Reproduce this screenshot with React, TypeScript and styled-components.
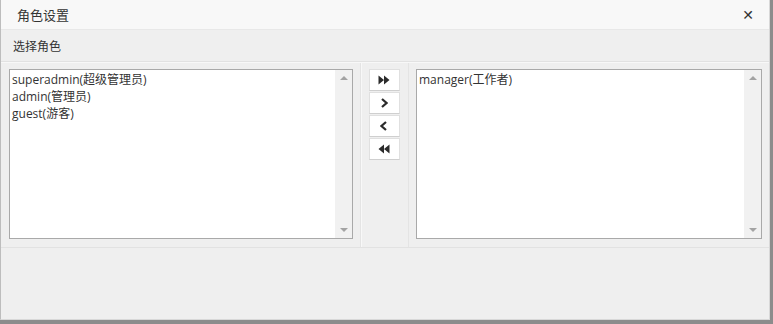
import React from "react";
import styled, { createGlobalStyle } from "styled-components";

const GlobalStyle = createGlobalStyle`
  html, body {
    margin: 0;
    padding: 0;
    background: #8c8c8c;
    font-family: "Open Sans", "Noto Sans CJK SC", sans-serif;
  }
`;

type Item = { id: string; label: string };

const sourceRoles: Item[] = [
  { id: "superadmin", label: "superadmin(超级管理员)" },
  { id: "admin", label: "admin(管理员)" },
  { id: "guest", label: "guest(游客)" },
];

const targetRoles: Item[] = [{ id: "manager", label: "manager(工作者)" }];

const Arrow = ({ dir, double }: { dir: "left" | "right"; double?: boolean }) => {
  const right = dir === "right";
  if (double) {
    const tri = (x: number) =>
      right ? `M${x} 0.5 L${x + 5.5} 5 L${x} 9.5 Z` : `M${x + 5.5} 0.5 L${x} 5 L${x + 5.5} 9.5 Z`;
    return (
      <svg width="12" height="10" viewBox="0 0 12 10">
        <path d={tri(0.5) + " " + tri(6)} fill="#2b2b2b" />
      </svg>
    );
  }
  const chev = right ? "M2 1 L6.5 5 L2 9" : "M6 1 L1.5 5 L6 9";
  return (
    <svg width="8" height="10" viewBox="0 0 8 10">
      <path d={chev} fill="none" stroke="#2b2b2b" strokeWidth="2.2" />
    </svg>
  );
};

const ListBox = ({ items }: { items: Item[] }) => (
  <StList>
    <StListBody>
      {items.map((it) => (
        <StOption key={it.id}>{it.label}</StOption>
      ))}
    </StListBody>
    <StScroll>
      <StScrollArrow up />
      <StScrollArrow />
    </StScroll>
  </StList>
);

const App = () => {
  return (
    <>
      <GlobalStyle />
      <StWindow>
        <StTitleBar>
          <StTitle>角色设置</StTitle>
          <StClose>✕</StClose>
        </StTitleBar>
        <StLabelRow>选择角色</StLabelRow>
        <StPicker>
          <StCell>
            <ListBox items={sourceRoles} />
          </StCell>
          <StMidCell>
            <StMoveBtn>
              <Arrow dir="right" double />
            </StMoveBtn>
            <StMoveBtn>
              <Arrow dir="right" />
            </StMoveBtn>
            <StMoveBtn>
              <Arrow dir="left" />
            </StMoveBtn>
            <StMoveBtn>
              <Arrow dir="left" double />
            </StMoveBtn>
          </StMidCell>
          <StCell>
            <ListBox items={targetRoles} />
          </StCell>
        </StPicker>
        <StFooter />
      </StWindow>
    </>
  );
};

export default App;

const StWindow = styled.div`
  width: 768px;
  height: 319px;
  background: #efefef;
  border: 1px solid #d8d8d8;
  border-top: none;
  border-left-color: #bdbdbd;
  display: flex;
  flex-direction: column;
`;

const StTitleBar = styled.div`
  height: 30px;
  background: #f8f8f8;
  border-bottom: 1px solid #e8e8e8;
  display: flex;
  align-items: center;
  justify-content: space-between;
  padding: 0 15px 0 16px;
  box-sizing: border-box;
`;

const StTitle = styled.div`
  font-size: 13px;
  color: #333;
`;

const StClose = styled.div`
  font-size: 14px;
  color: #333;
  font-family: "DejaVu Sans", sans-serif;
`;

const StLabelRow = styled.div`
  height: 32px;
  background: #efefef;
  border-bottom: 1px solid #e2e2e2;
  display: flex;
  align-items: center;
  padding-left: 12px;
  font-size: 12px;
  color: #333;
  box-sizing: border-box;
`;

const StPicker = styled.div`
  display: grid;
  grid-template-columns: 360px 48px 1fr;
  border-top: 1px solid #f8f8f8;
  border-bottom: 1px solid #e2e2e2;
  height: 186px;
  box-sizing: border-box;
`;

const StCell = styled.div`
  padding: 6px 7px 8px 8px;
  border-right: 1px solid #e4e4e4;
  box-sizing: border-box;
  display: flex;
  &:last-child {
    border-right: none;
    padding-left: 7px;
  }
`;

const StMidCell = styled.div`
  display: flex;
  flex-direction: column;
  align-items: center;
  gap: 1px;
  padding-top: 6px;
  border-right: 1px solid #e4e4e4;
  border-left: 1px solid #f8f8f8;
  box-sizing: border-box;
`;

const StMoveBtn = styled.button`
  width: 31px;
  height: 22px;
  padding: 0;
  margin-right: 2px;
  background: #fff;
  border: 1px solid #e0e0e0;
  border-bottom-color: #cfcfcf;
  display: flex;
  align-items: center;
  justify-content: center;
  cursor: pointer;
`;

const StList = styled.div`
  flex: 1;
  display: flex;
  background: #fff;
  border: 1px solid #a9a9a9;
`;

const StListBody = styled.div`
  flex: 1;
  padding: 1px 2px;
`;

const StOption = styled.div`
  font-size: 12px;
  line-height: 17px;
  color: #333;
`;

const StScroll = styled.div`
  width: 17px;
  background: #f1f1f1;
  display: flex;
  flex-direction: column;
  justify-content: space-between;
  align-items: center;
  padding: 6px 0;
`;

const StScrollArrow = styled.div<{ up?: boolean }>`
  width: 0;
  height: 0;
  border-left: 4px solid transparent;
  border-right: 4px solid transparent;
  ${({ up }) => (up ? "border-bottom: 4px solid #a3a3a3;" : "border-top: 4px solid #a3a3a3;")}
`;

const StFooter = styled.div`
  flex: 1;
  background: #efefef;
`;
